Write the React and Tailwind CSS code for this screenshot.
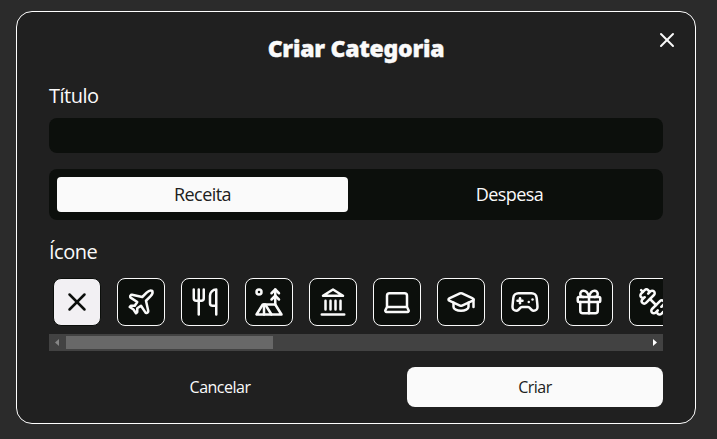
import { Gamepad2, Gift, GraduationCap, Plane, TentTree, Utensils, X } from "lucide-react";

function Stroke({ size, children }) {
  return (
    <svg width={size} height={size} viewBox="0 0 24 24" fill="none" stroke="currentColor" strokeWidth="2" strokeLinecap="round" strokeLinejoin="round">
      {children}
    </svg>
  );
}

function Landmark({ size }) {
  return (
    <Stroke size={size}>
      <path d="M3 22h18M6 18v-7M10 18v-7M14 18v-7M18 18v-7" />
      <path d="M12 2l8 5H4z" />
    </Stroke>
  );
}

function Laptop({ size }) {
  return (
    <Stroke size={size}>
      <path d="M20 16V7a2 2 0 0 0-2-2H6a2 2 0 0 0-2 2v9m16 0H4m16 0 1.28 2.55a1 1 0 0 1-.9 1.45H3.62a1 1 0 0 1-.9-1.45L4 16" />
    </Stroke>
  );
}

function Dumbbell({ size }) {
  return (
    <Stroke size={size}>
      <path d="M14.4 14.4 9.6 9.6" />
      <path d="M18.657 21.485a2 2 0 1 1-2.829-2.828l-1.767 1.768a2 2 0 1 1-2.829-2.829l6.364-6.364a2 2 0 1 1 2.829 2.829l-1.768 1.767a2 2 0 1 1 2.828 2.829z" />
      <path d="m21.5 21.5-1.4-1.4" />
      <path d="M3.9 3.9 2.5 2.5" />
      <path d="M6.404 12.768a2 2 0 1 1-2.829-2.829l1.768-1.767a2 2 0 1 1-2.828-2.829l2.828-2.828a2 2 0 1 1 2.829 2.828l1.767-1.768a2 2 0 1 1 2.829 2.829z" />
    </Stroke>
  );
}

const icons = [X, Plane, Utensils, TentTree, Landmark, Laptop, GraduationCap, Gamepad2, Gift, Dumbbell];

function Label({ children }) {
  return <span className="block h-[28px] text-[20px] leading-[28px] tracking-[-0.5px]">{children}</span>;
}

function IconPicker() {
  return (
    <div className="mt-[8px]">
      <div className="flex gap-4 overflow-hidden px-1 pt-1 pb-2">
        {icons.map((Icon, i) => (
          <button
            key={i}
            className={
              i === 0
                ? "h-12 w-12 shrink-0 rounded-lg border border-[#0c0f0c] bg-[#f2f0f3] p-2 text-[#0c0f0c]"
                : "h-12 w-12 shrink-0 rounded-lg border border-[#fafafa] bg-[#0c0f0c] p-2 text-[#fafafa]"
            }
          >
            <Icon size={30} />
          </button>
        ))}
      </div>
      <div className="flex h-[17px] items-center bg-[#424242]">
        <div className="w-[17px] pl-[6px]">
          <svg width="4" height="7" viewBox="0 0 4 7" fill="#868686"><path d="M4 0v7L0 3.5z" /></svg>
        </div>
        <div className="h-[13px] w-[207px] bg-[#686868]" />
        <div className="flex flex-1 justify-end pr-[6px]">
          <svg width="4" height="7" viewBox="0 0 4 7" fill="#ffffff"><path d="M0 0v7l4-3.5z" /></svg>
        </div>
      </div>
    </div>
  );
}

export default function App() {
  return (
    <div className="flex h-[439px] w-[717px] items-start bg-[#2b2b2b] pt-[11px] pl-4 font-['Open_Sans','Noto_Sans',sans-serif] text-[#fafafa]">
      <div className="relative h-[413px] w-[680px] rounded-2xl border border-white bg-[#202020] px-8 pt-5">
        <button className="absolute top-4 right-4">
          <X size={24} />
        </button>
        <h1 className="h-8 text-center font-['Noto_Sans','Open_Sans',sans-serif] text-[23px] leading-8 font-black tracking-[-0.25px] [-webkit-text-stroke:0.4px_#fafafa]">Criar Categoria</h1>
        <div className="mt-[18px]">
          <Label>Título</Label>
          <input className="mt-2 block h-[35px] w-full rounded-lg bg-[#0c0f0c] px-2 outline-none" />
        </div>
        <div className="mt-4 flex gap-4 rounded-lg bg-[#0c0f0c] p-2 text-[18px] tracking-[-0.55px]">
          <button className="h-[35px] flex-1 rounded-[4px] bg-[#fafafa] text-[#202020]">Receita</button>
          <button className="h-[35px] flex-1">Despesa</button>
        </div>
        <div className="mt-[18px]">
          <Label>Ícone</Label>
          <IconPicker />
        </div>
        <div className="mt-4 flex gap-4 text-[16px] tracking-[-0.5px]">
          <button className="h-10 flex-1">Cancelar</button>
          <button className="h-10 w-64 rounded-lg bg-[#fafafa] text-[#202020]">Criar</button>
        </div>
      </div>
    </div>
  );
}
